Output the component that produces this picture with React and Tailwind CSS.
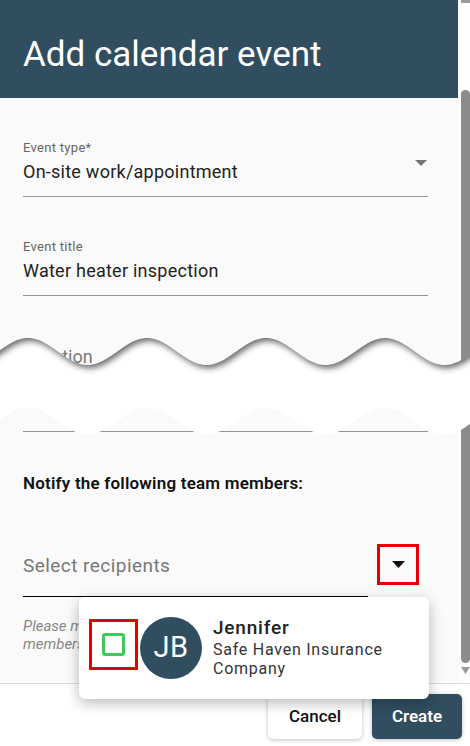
import React from "react";

const P = 119;
const X0 = 28;
const topY = (x) => 21.5 - 13.5 * Math.cos((2 * Math.PI * (x - X0)) / P);
const botY = (x) => 91 - 13.5 * Math.cos((2 * Math.PI * (x - X0)) / P);

function wavePoints(fn, from, to, step = 2) {
  const pts = [];
  for (let x = from; x <= to; x += step) pts.push([x, fn(x)]);
  return pts;
}

const topPts = wavePoints(topY, -10, 480);
const botPts = wavePoints(botY, -10, 480).reverse();
const bandPath =
  "M" +
  topPts.map((p) => p[0] + " " + p[1].toFixed(2)).join(" L") +
  " L" +
  botPts.map((p) => p[0] + " " + p[1].toFixed(2)).join(" L") +
  " Z";
const topPiece =
  "M-10 -30 L480 -30 L" +
  [...topPts].reverse().map((p) => p[0] + " " + p[1].toFixed(2)).join(" L") +
  " Z";

function Tear() {
  // torn-paper cut across the middle of the form
  return (
    <svg
      className="absolute left-0 top-[330px]"
      width="470"
      height="115"
      viewBox="0 0 470 115"
    >
      <defs>
        <clipPath id="band">
          <path d={bandPath} />
        </clipPath>
        <filter id="sh" x="-10%" y="-50%" width="120%" height="200%">
          <feGaussianBlur stdDeviation="3" />
        </filter>
      </defs>
      <path d={bandPath} fill="#ffffff" />
      <g clipPath="url(#band)">
        <path
          d={topPiece}
          fill="#333"
          opacity="0.75"
          filter="url(#sh)"
          transform="translate(2,3)"
        />
      </g>
    </svg>
  );
}

function Field({ label, value, arrow }) {
  return (
    <div className="flex items-start border-b border-[#949494] pb-[12px]">
      <div className="flex-1">
        <div className="text-[13px] leading-[16px] tracking-[0.3px] text-[#666]">
          {label}
        </div>
        <div className="mt-[4px] text-[18px] leading-[24px] tracking-[0.25px] text-[#222]">
          {value}
        </div>
      </div>
      {arrow && (
        <svg width="12" height="6" viewBox="0 0 12 6" className="mt-[20px] mr-[1px]">
          <path d="M0 0 L12 0 L6 6 Z" fill="#757575" />
        </svg>
      )}
    </div>
  );
}

function Scrollbar() {
  return (
    <div className="w-[12px] bg-[#fdfdfd] flex flex-col items-end">
      <div className="w-[9px] h-[3px] bg-[#9a9a9a]" />
      <div className="mt-[87px] w-[9px] h-[573px] rounded-full bg-[#8b8b8b]" />
      <svg width="9" height="7" viewBox="0 0 9 7" className="mt-[4px]">
        <path d="M0 0 L9 0 L4.5 7 Z" fill="#9a9a9a" />
      </svg>
    </div>
  );
}

function Recipient() {
  return (
    <div className="absolute left-[79px] top-[597px] w-[350px] h-[102px] bg-white rounded-md shadow-[0_4px_14px_rgba(0,0,0,0.28)] flex items-center pl-[10px]">
      <div className="w-[49px] h-[51px] border-[3px] border-[#e50000] flex items-center justify-center -mt-[7px]">
        <div className="w-[23px] h-[23px] rounded-[3px] border-[3px] border-[#3ccb5a] bg-white" />
      </div>
      <div className="ml-[2px] w-[62px] h-[62px] rounded-full bg-[#304e60] flex items-center justify-center text-white text-[29px] tracking-[0.5px]">
        JB
      </div>
      <div className="ml-[11px] -mt-[1px]">
        <div className="text-[19px] leading-[22px] font-medium tracking-[0.8px] text-[#222]">
          Jennifer
        </div>
        <div className="mt-[1px] text-[16px] leading-[19px] tracking-[0.75px] text-[#333]">
          Safe Haven Insurance
          <br />
          Company
        </div>
      </div>
    </div>
  );
}

export default function App() {
  return (
    <div className="relative w-[470px] h-[746px] overflow-hidden bg-white flex flex-col font-['Roboto','Liberation_Sans',sans-serif]">
      <div className="flex h-[683px]">
        <div className="flex-1 flex flex-col">
          <div className="h-[98px] bg-[#304e60] px-[23px] pt-[35px]">
            <h1 className="text-white text-[35px] leading-[40px]">
              Add calendar event
            </h1>
          </div>
          <div className="flex-1 bg-[#fafafa] pl-[23px] pr-[30px] pt-[42px]">
            <Field label="Event type*" value="On-site work/appointment" arrow />
            <div className="mt-[42px]">
              <Field label="Event title" value="Water heater inspection" />
            </div>
            <div className="mt-[49px] text-[18px] leading-[24px] text-[#777]">
              Location
            </div>
            <div className="mt-[62px] border-b border-[#949494]" />
            <div className="mt-[39px] text-[17px] leading-[24px] font-semibold tracking-[0.2px] text-[#111]">
              Notify the following team members:
            </div>
            <div className="mt-[49px] flex items-start">
              <div className="w-[345px] pt-[9px] pb-[17px] border-b border-black">
                <div className="text-[19px] leading-[26px] tracking-[0.45px] text-[#777]">
                  Select recipients
                </div>
              </div>
              <div className="ml-[9px] w-[42px] h-[41px] border-[3px] border-[#e50000] flex items-center justify-center">
                <svg width="13" height="7" viewBox="0 0 13 7">
                  <path d="M0 0 L13 0 L6.5 7 Z" fill="#111" />
                </svg>
              </div>
            </div>
            <div className="mt-[20px] text-[15px] leading-[18px] italic text-[#888]">
              Please make sure to notify only the relevant team
              <br />
              members about this event.
            </div>
          </div>
        </div>
        <Scrollbar />
      </div>
      <div className="flex-1 border-t border-[#dcdcdc] bg-white flex justify-end items-start pt-[10px] pr-[8px] gap-[10px]">
        <button className="w-[94px] h-[45px] rounded-[5px] bg-white shadow-[0_1px_4px_rgba(0,0,0,0.25)] text-[17px] font-medium text-[#111]">
          Cancel
        </button>
        <button className="w-[90px] h-[45px] rounded-[5px] bg-[#304e60] shadow-[0_1px_4px_rgba(0,0,0,0.25)] text-[17px] font-semibold text-white">
          Create
        </button>
      </div>
      <Tear />
      <Recipient />
    </div>
  );
}
